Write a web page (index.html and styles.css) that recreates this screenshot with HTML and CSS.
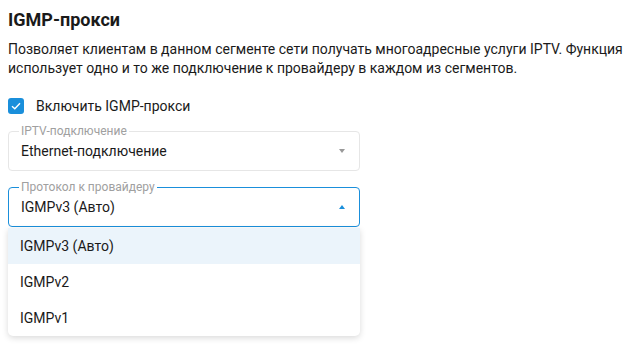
FILE: index.html
```html
<!DOCTYPE html>
<html lang="ru">
<head>
    <meta charset="UTF-8">
    <title>IGMP-прокси</title>
    <link rel="stylesheet" href="styles.css">
</head>
<body>
    <section class="page">
        <h1>IGMP-прокси</h1>
        <p class="desc">Позволяет клиентам в данном сегменте сети получать многоадресные услуги IPTV. Функция использует одно и то же подключение к провайдеру в каждом из сегментов.</p>

        <label class="check">
            <span class="box">
                <svg width="10" height="8" viewBox="0 0 10 8"><path d="M1 4.2 L3.8 6.8 L9 1.2" fill="none" stroke="#fff" stroke-width="1.4"/></svg>
            </span>
            Включить IGMP-прокси
        </label>

        <fieldset class="field">
            <legend>IPTV-подключение</legend>
            <div class="value">Ethernet-подключение <span class="arrow down"></span></div>
        </fieldset>

        <div class="select-wrap">
            <fieldset class="field active">
                <legend>Протокол к провайдеру</legend>
                <div class="value">IGMPv3 (Авто) <span class="arrow up"></span></div>
            </fieldset>
            <ul class="menu">
                <li class="selected">IGMPv3 (Авто)</li>
                <li>IGMPv2</li>
                <li>IGMPv1</li>
            </ul>
        </div>
    </section>
</body>
</html>
```

FILE: styles.css
```css
body { margin: 0; padding: 8px; font-family: Roboto, "Liberation Sans", sans-serif; color: #1a1a1a; background: #fff; }
h1 { margin: 0; font-size: 18px; line-height: 24px; font-weight: bold; color: #1a1a1a; }
.desc { margin: 8px 0 0; font-size: 14px; line-height: 19px; }
.check { display: flex; align-items: center; gap: 12px; margin-top: 20px; font-size: 14px; line-height: 16px; }
.box { width: 16px; height: 16px; border-radius: 3px; background: #1a8fdb; display: flex; align-items: center; justify-content: center; }
.field { margin: 10px 0 0; padding: 0 12px; width: 352px; box-sizing: border-box; border: 1px solid #e6e6e6; border-radius: 4px; }
.field legend { margin-left: -2px; padding: 0 2px; font-size: 12px; line-height: 14px; color: #a0a0a0; }
.field .value { display: flex; align-items: center; justify-content: space-between; height: 38px; margin-top: -6px; font-size: 14px; }
.field.active { border-color: #1a8fdb; }
.arrow { width: 0; height: 0; border-left: 3.5px solid transparent; border-right: 3.5px solid transparent; margin-right: 2px; }
.arrow.down { border-top: 4px solid #999; }
.arrow.up { border-bottom: 4px solid #1a8fdb; }
.select-wrap { margin-top: 9px; }
.select-wrap .field { margin-top: 0; }
.menu { width: 352px; margin: 1px 0 0; padding: 0; list-style: none; background: #fff; border-radius: 0 0 5px 5px; box-shadow: 0 2px 6px rgba(0, 0, 0, 0.15); overflow: hidden; }
.menu li { height: 36px; line-height: 36px; padding: 0 12px; font-size: 14px; }
.menu li.selected { background: #ebf4fb; }
```
